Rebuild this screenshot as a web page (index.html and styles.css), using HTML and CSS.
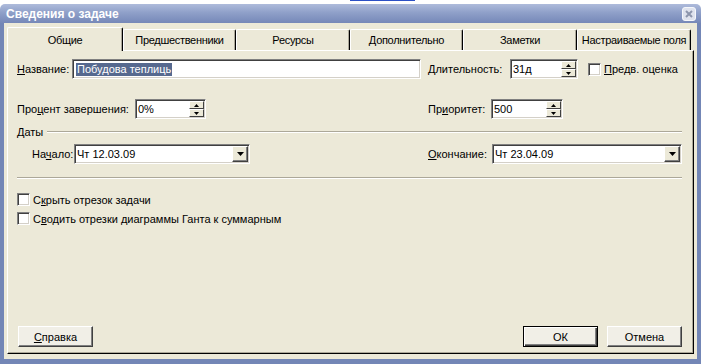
FILE: index.html
```html
<!DOCTYPE html>
<html lang="ru">

<head>
    <meta charset="UTF-8">
    <title>Сведения о задаче</title>
    <link rel="stylesheet" href="styles.css">
</head>

<body>
    <div class="backdrop"><div class="backdrop-link"></div></div>

    <div class="window">
        <div class="titlebar">
            <span class="title">Сведения о задаче</span>
            <span class="close">
                <svg width="14" height="14" viewBox="0 0 14 14">
                    <rect x="0.5" y="0.5" width="13" height="13" rx="2.5" fill="#dfe3ee" stroke="#f5f7fb" />
                    <path d="M4 4 L10 10 M10 4 L4 10" stroke="#8d96ad" stroke-width="2" />
                </svg>
            </span>
        </div>

        <div class="frame">
            <div class="client">
                <div class="tabs">
                    <div class="tab active tab-w116">Общие</div>
                    <div class="tab tab-w113">Предшественники</div>
                    <div class="tab tab-w114">Ресурсы</div>
                    <div class="tab tab-w113">Дополнительно</div>
                    <div class="tab tab-w114">Заметки</div>
                    <div class="tab tab-w114">Настраиваемые поля</div>
                </div>

                <div class="panel">
                    <div class="row row-name">
                        <div class="left">
                            <span class="lbl lbl-name"><u>Н</u>азвание:</span>
                            <div class="edit edit-name"><span class="sel">Побудова теплиць</span></div>
                        </div>
                        <div class="right">
                            <span class="lbl lbl-dur"><u>Д</u>лительность:</span>
                            <div class="edit edit-dur">
                                <span class="value">31д</span>
                                <div class="spin">
                                    <div class="spin-btn"><svg width="5" height="3" viewBox="0 0 5 3"><path d="M2.5 0 L5 3 L0 3 Z" /></svg></div>
                                    <div class="spin-btn"><svg width="5" height="3" viewBox="0 0 5 3"><path d="M0 0 L5 0 L2.5 3 Z" /></svg></div>
                                </div>
                            </div>
                            <div class="check check-est">
                                <span class="box"></span>
                                <span><u>П</u>редв. оценка</span>
                            </div>
                        </div>
                    </div>

                    <div class="row row-pct">
                        <div class="left">
                            <span class="lbl lbl-pct">Про<u>ц</u>ент завершения:</span>
                            <div class="edit edit-pct">
                                <span class="value">0%</span>
                                <div class="spin">
                                    <div class="spin-btn"><svg width="5" height="3" viewBox="0 0 5 3"><path d="M2.5 0 L5 3 L0 3 Z" /></svg></div>
                                    <div class="spin-btn"><svg width="5" height="3" viewBox="0 0 5 3"><path d="M0 0 L5 0 L2.5 3 Z" /></svg></div>
                                </div>
                            </div>
                        </div>
                        <div class="right">
                            <span class="lbl lbl-pri">Пр<u>и</u>оритет:</span>
                            <div class="edit edit-pri">
                                <span class="value">500</span>
                                <div class="spin">
                                    <div class="spin-btn"><svg width="5" height="3" viewBox="0 0 5 3"><path d="M2.5 0 L5 3 L0 3 Z" /></svg></div>
                                    <div class="spin-btn"><svg width="5" height="3" viewBox="0 0 5 3"><path d="M0 0 L5 0 L2.5 3 Z" /></svg></div>
                                </div>
                            </div>
                        </div>
                    </div>

                    <div class="group-head">
                        <span>Даты</span>
                        <span class="groove"></span>
                    </div>

                    <div class="row row-dates">
                        <div class="left">
                            <span class="lbl lbl-start">На<u>ч</u>ало:</span>
                            <div class="edit combo combo-start">
                                <span class="value">Чт 12.03.09</span>
                                <div class="drop-btn"><svg width="7" height="4" viewBox="0 0 7 4"><path d="M0 0 L7 0 L3.5 4 Z" /></svg></div>
                            </div>
                        </div>
                        <div class="right">
                            <span class="lbl lbl-end"><u>О</u>кончание:</span>
                            <div class="edit combo combo-end">
                                <span class="value">Чт 23.04.09</span>
                                <div class="drop-btn"><svg width="7" height="4" viewBox="0 0 7 4"><path d="M0 0 L7 0 L3.5 4 Z" /></svg></div>
                            </div>
                        </div>
                    </div>

                    <div class="separator"></div>

                    <div class="check check-hide">
                        <span class="box"></span>
                        <span>С<u>к</u>рыть отрезок задачи</span>
                    </div>
                    <div class="check check-roll">
                        <span class="box"></span>
                        <span>С<u>в</u>одить отрезки диаграммы Ганта к суммарным</span>
                    </div>

                    <div class="buttons">
                        <div class="btn btn-help"><span><u>С</u>правка</span></div>
                        <div class="btn-group">
                            <div class="btn default">ОК</div>
                            <div class="btn">Отмена</div>
                        </div>
                    </div>
                </div>
            </div>
        </div>
    </div>
</body>

</html>
```

FILE: styles.css
```css
body {
    margin: 0;
    background: #fff;
    font-family: "Liberation Sans", Arial, sans-serif;
    font-size: 11px;
    color: #000;
}

.backdrop {
    height: 4px;
    display: flex;
}

.backdrop-link {
    margin-left: 350px;
    width: 65px;
    height: 1px;
    background: #2a4fc4;
}

.window {
    width: 701px;
    height: 360px;
    display: flex;
    flex-direction: column;
}

.titlebar {
    height: 19px;
    display: flex;
    align-items: center;
    justify-content: space-between;
    padding: 0 5px 0 6px;
    background: linear-gradient(#aebbdb, #8fa0c9 45%, #7688b8);
    border-radius: 5px 5px 0 0;
}

.title {
    color: #fff;
    font-weight: bold;
    font-size: 12px;
}

.close {
    display: flex;
}

.frame {
    flex: 1;
    display: flex;
    border: 4px solid #7386b6;
    border-top: 0;
    border-bottom-width: 5px;
    background: #ece9d8;
}

.client {
    flex: 1;
    display: flex;
    flex-direction: column;
    padding: 4px 4px 5px 3px;
}

/* tabs */
.tabs {
    display: flex;
    align-items: flex-end;
    height: 23px;
}

.tab {
    box-sizing: border-box;
    height: 21px;
    display: flex;
    align-items: center;
    justify-content: center;
    border-top: 1px solid #fff;
    border-left: 1px solid #fff;
    border-right: 1px solid #000;
    box-shadow: inset -1px 0 #aca899;
    border-radius: 2px 2px 0 0;
    background: #ece9d8;
    white-space: nowrap;
    letter-spacing: -0.3px;
    overflow: hidden;
}

.tab.active {
    height: 24px;
    margin-bottom: -1px;
    position: relative;
    z-index: 1;
}

.tab-w116 { width: 116px; }
.tab-w113 { width: 113px; }
.tab-w114 { width: 114px; }

/* panel */
.panel {
    flex: 1;
    box-sizing: border-box;
    border: 1px solid;
    border-color: #fff #000 #000 #fff;
    box-shadow: inset -1px -1px #aca899;
    padding: 8px 11px 6px 9px;
    display: flex;
    flex-direction: column;
}

.row {
    display: flex;
    align-items: center;
}

.left {
    width: 411px;
    display: flex;
    align-items: center;
}

.right {
    display: flex;
    align-items: center;
}

.row-pct {
    margin-top: 20px;
}

.lbl {
    white-space: nowrap;
}

.lbl-name { width: 55px; }
.lbl-pct { width: 118px; }
.lbl-start { width: 42px; margin-left: 15px; }
.lbl-dur { width: 82px; }
.lbl-pri { width: 63px; }
.lbl-end { width: 64px; }

/* sunken fields */
.edit {
    box-sizing: border-box;
    height: 20px;
    padding: 1px;
    display: flex;
    align-items: center;
    background: #fff;
    border: 1px solid;
    border-color: #808080 #fff #fff #808080;
    box-shadow: inset 1px 1px #404040, inset -1px -1px #d4d0c8;
}

.edit .value {
    flex: 1;
    padding-left: 1px;
}

.edit-name { width: 349px; }
.edit-dur { width: 68px; }
.edit-pct { width: 71px; }
.edit-pri { width: 72px; }
.combo-start { width: 176px; }
.combo-end { width: 190px; }

.sel {
    margin-left: 2px;
    padding: 0 1px;
    line-height: 13px;
    background: #56698f;
    color: #fff;
}

.spin {
    align-self: stretch;
    width: 15px;
    display: flex;
    flex-direction: column;
}

.spin-btn {
    flex: 1;
    display: flex;
    align-items: center;
    justify-content: center;
    background: #ece9d8;
    border: 1px solid;
    border-color: #fff #404040 #404040 #fff;
}

.drop-btn {
    align-self: stretch;
    width: 16px;
    box-sizing: border-box;
    display: flex;
    align-items: center;
    justify-content: center;
    background: #ece9d8;
    border: 1px solid;
    border-color: #fff #404040 #404040 #fff;
    box-shadow: inset -1px -1px #808080;
}

/* group and separator */
.group-head {
    margin-top: 6px;
    height: 13px;
    display: flex;
    align-items: center;
}

.groove {
    flex: 1;
    margin-left: 4px;
    border-top: 1px solid #aca899;
    border-bottom: 1px solid #fff;
}

.row-dates {
    margin-top: 6px;
}

.separator {
    margin-top: 13px;
    border-top: 1px solid #aca899;
    border-bottom: 1px solid #fff;
}

/* checkboxes */
.check {
    display: flex;
    align-items: center;
    gap: 3px;
    height: 13px;
    white-space: nowrap;
}

.check-est {
    margin-left: 10px;
}

.check-hide {
    margin-top: 14px;
}

.check-roll {
    margin-top: 6px;
}

.box {
    box-sizing: border-box;
    width: 13px;
    height: 13px;
    background: #fff;
    border: 1px solid;
    border-color: #808080 #fff #fff #808080;
    box-shadow: inset 1px 1px #404040, inset -1px -1px #d4d0c8;
}

/* buttons */
.buttons {
    margin-top: auto;
    display: flex;
    justify-content: space-between;
    align-items: center;
}

.btn-group {
    display: flex;
    gap: 9px;
}

.btn {
    box-sizing: border-box;
    width: 75px;
    height: 21px;
    display: flex;
    align-items: center;
    justify-content: center;
    background: #f1efe7;
    border: 1px solid;
    border-color: #fff #404040 #404040 #fff;
    box-shadow: inset -1px -1px #808080;
}

.btn-help {
    margin-left: 1px;
}

.btn.default {
    border-color: #000;
    box-shadow: inset 1px 1px #fff, inset -1px -1px #404040, inset -2px -2px #808080;
}
```
